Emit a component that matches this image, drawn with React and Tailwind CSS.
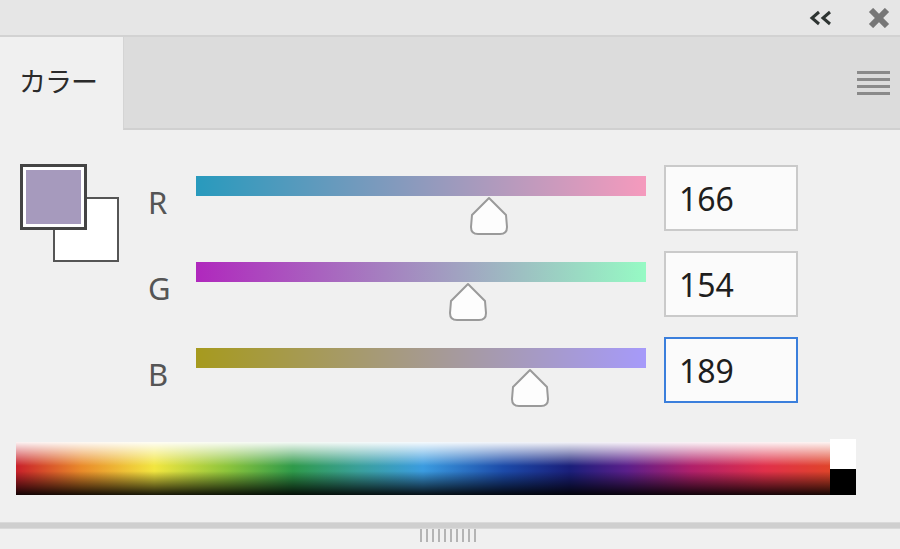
import React from 'react';

const channels = [
  { label: 'R', value: 166, bar: 'linear-gradient(to right, rgb(40,154,189), rgb(245,154,189))', focus: false },
  { label: 'G', value: 154, bar: 'linear-gradient(to right, rgb(176,40,189), rgb(150,250,196))', focus: false },
  { label: 'B', value: 189, bar: 'linear-gradient(to right, rgb(166,154,30), rgb(166,154,250))', focus: true },
];

const Thumb = () => (
  <svg width="42" height="40" viewBox="0 0 42 40">
    <path d="M21 2 L38 19 L39 31 Q39 38 32 38 L10 38 Q3 38 3 31 L4 19 Z" fill="#fdfdfd" stroke="#9a9a9a" strokeWidth="2" strokeLinejoin="round" />
  </svg>
);

const ColorPanel = () => {
  return (
    <div className="w-[900px] h-[549px] flex flex-col bg-[#f0f0f0] overflow-hidden" style={{ fontFamily: '"Noto Sans", "Noto Sans CJK JP", sans-serif' }}>
      {/* title bar */}
      <div className="h-[37px] bg-[#e6e6e6] border-b-2 border-[#d2d2d2] flex items-center justify-end pr-[10px]">
        <svg width="26" height="16" viewBox="0 0 26 16" className="mr-[34px]">
          <path d="M11 2 L4 8 L11 14 M22 2 L15 8 L22 14" fill="none" stroke="#2e3432" strokeWidth="3" />
        </svg>
        <svg width="22" height="20" viewBox="0 0 22 20">
          <path d="M3 2 L19 18 M19 2 L3 18" stroke="#777" strokeWidth="6" />
        </svg>
      </div>

      {/* tab row */}
      <div className="h-[93px] flex">
        <div className="w-[123px] bg-[#f0f0f0] flex items-center pl-[19px] pb-[4px]">
          <span className="text-[27px] text-[#2b2b2b] tracking-[-1px]" style={{ fontFamily: '"Noto Sans CJK JP", sans-serif' }}>カラー</span>
        </div>
        <div className="flex-1 bg-[#dcdcdc] border-b-2 border-[#d0d0d0] border-l border-l-[#d4d4d4] flex items-center justify-end pr-[10px]">
          <div className="flex flex-col gap-[4px] w-[33px]">
            <div className="h-[3px] bg-[#8a8a8a]" />
            <div className="h-[3px] bg-[#8a8a8a]" />
            <div className="h-[3px] bg-[#8a8a8a]" />
            <div className="h-[3px] bg-[#8a8a8a]" />
          </div>
        </div>
      </div>

      {/* sliders */}
      <div className="flex pt-[34px]">
        <div className="relative ml-[20px] w-[100px] h-[98px] shrink-0">
          <div className="absolute left-[33px] top-[33px] w-[66px] h-[65px] bg-white border-2 border-[#555]" />
          <div className="absolute left-0 top-0 w-[67px] h-[66px] bg-white border-[3px] border-[#444] p-[3px]">
            <div className="w-full h-full bg-[#a69abd]" />
          </div>
        </div>
        <div className="ml-[28px] flex flex-col pt-[1px]">
          {channels.map((c) => (
            <div key={c.label} className="h-[86px] flex items-start">
              <div className="w-[48px] pt-[17px] text-[31px] leading-[40px] text-[#555]">{c.label}</div>
              <div className="relative w-[450px] mt-[11px]">
                <div className="h-[20px]" style={{ background: c.bar }} />
                <div className="absolute top-[20px]" style={{ left: `${(c.value / 255) * 450 - 21}px` }}>
                  <Thumb />
                </div>
              </div>
              <div className={`ml-[18px] w-[134px] h-[66px] bg-[#fbfbfb] border-2 flex items-center pl-[13px] pt-[2px] text-[32px] text-[#1e1e1e] ${c.focus ? 'border-[#3b7fdc]' : 'border-[#cacaca]'}`}>
                {c.value}
              </div>
            </div>
          ))}
        </div>
      </div>

      {/* spectrum */}
      <div className="flex items-end ml-[16px] mt-[16px]">
        <div
          className="w-[814px] h-[53px]"
          style={{
            background:
              'linear-gradient(to bottom, rgba(255,255,255,0.95) 0%, rgba(255,255,255,0) 45%, rgba(0,0,0,0) 55%, rgba(0,0,0,0.9) 100%), linear-gradient(to right, #c8202a 0%, #e98a2a 8%, #f2e640 17%, #8cc43c 26%, #2f9a4a 34%, #3aa09a 42%, #3b9ce0 50%, #1c4aa8 60%, #1a1f7a 68%, #5a1f8a 75%, #b0206a 83%, #e0304a 92%, #e0442a 100%)',
          }}
        />
        <div className="w-[26px] flex flex-col">
          <div className="h-[30px] bg-white" />
          <div className="h-[26px] bg-black" />
        </div>
      </div>

      {/* bottom grip */}
      <div className="mt-[27px] h-[7px] bg-[#cfcfcf] border-y border-[#dadada]" />
      <div className="flex justify-center gap-[4px] pr-[4px]">
        {Array.from({ length: 10 }).map((_, i) => (
          <div key={i} className="w-[2px] h-[13px] bg-[#b4b4b4]" />
        ))}
      </div>
    </div>
  );
};

export default function App() {
  return <ColorPanel />;
}
